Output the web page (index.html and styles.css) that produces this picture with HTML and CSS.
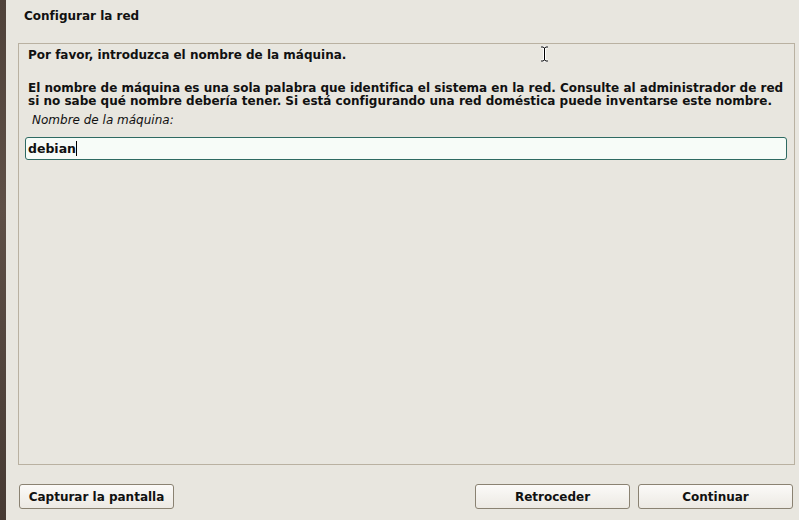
FILE: index.html
```html
<!DOCTYPE html>
<html lang="es">
<head>
<meta charset="utf-8">
<title>Configurar la red</title>
<link rel="stylesheet" href="styles.css">
</head>
<body>
<div class="screen">
  <div class="desk"></div>
  <div class="window">
    <div class="title">Configurar la red</div>
    <div class="panel">
      <p class="question">Por favor, introduzca el nombre de la máquina.</p>
      <p class="desc">El nombre de máquina es una sola palabra que identifica el sistema en la red. Consulte al administrador de red si no sabe qué nombre debería tener. Si está configurando una red doméstica puede inventarse este nombre.</p>
      <p class="label">Nombre de la máquina:</p>
      <div class="entry"><span class="value">debian</span><span class="caret"></span></div>
    </div>
    <div class="buttons">
      <button class="btn">Capturar la pantalla</button>
      <div class="spacer"></div>
      <button class="btn">Retroceder</button>
      <button class="btn">Continuar</button>
    </div>
  </div>
  <svg class="ibeam" width="9" height="16" viewBox="0 0 9 16">
    <path d="M1 1h2l1.5 1 1.5-1h2M4.5 2v12M1 15h2l1.5-1 1.5 1h2" fill="none" stroke="#fff" stroke-width="3"/>
    <path d="M1 1h2l1.5 1 1.5-1h2M4.5 2v12M1 15h2l1.5-1 1.5 1h2" fill="none" stroke="#000" stroke-width="1"/>
  </svg>
</div>
</body>
</html>
```
FILE: styles.css
```css
html, body {
  margin: 0;
  padding: 0;
  background: #e8e6df;
}
.screen {
  position: relative;
  display: flex;
  width: 799px;
  height: 520px;
  overflow: hidden;
  font-family: "DejaVu Sans", sans-serif;
  font-size: 12px;
  color: #111;
}
.desk {
  width: 6px;
  flex: none;
  background: linear-gradient(to bottom, #4f423a, #5e4f46 40%, #463a33);
}
.window {
  flex: 1;
  display: flex;
  flex-direction: column;
  padding: 0 4px 0 12px;
}
.title {
  height: 43px;
  box-sizing: border-box;
  padding: 9px 0 0 6px;
  font-weight: bold;
}
.panel {
  height: 422px;
  box-sizing: border-box;
  border: 1px solid #b9b1a1;
  padding: 4px 7px 0 6px;
}
.panel p {
  margin: 0;
  font-weight: bold;
}
.question {
  padding-left: 3px;
  line-height: 14px;
}
.desc {
  padding: 20px 0 0 3px;
  line-height: 13px;
}
.panel p.label {
  font-weight: normal;
  font-style: italic;
  padding: 5px 0 0 7px;
  line-height: 14px;
}
.entry {
  margin-top: 10px;
  height: 23px;
  box-sizing: border-box;
  border: 1px solid #2e6a62;
  border-radius: 3px;
  background: #f7fcf8;
  display: flex;
  align-items: center;
  padding-left: 2px;
  font-weight: bold;
  font-size: 12.5px;
}
.caret {
  width: 1px;
  height: 15px;
  background: #000;
}
.buttons {
  display: flex;
  align-items: center;
  padding: 19px 2px 0 0;
  gap: 8px;
}
.spacer {
  flex: 1;
}
.btn {
  width: 155px;
  height: 25px;
  border: 1px solid #8a8272;
  border-radius: 3px;
  background: linear-gradient(to bottom, #fbfaf8, #ece9e3);
  font-family: "DejaVu Sans", sans-serif;
  font-size: 12px;
  font-weight: bold;
  color: #111;
  padding: 0;
  margin: 0;
}
.btn:first-child {
  margin-left: 1px;
}
.ibeam {
  position: absolute;
  left: 540px;
  top: 46px;
}
```
